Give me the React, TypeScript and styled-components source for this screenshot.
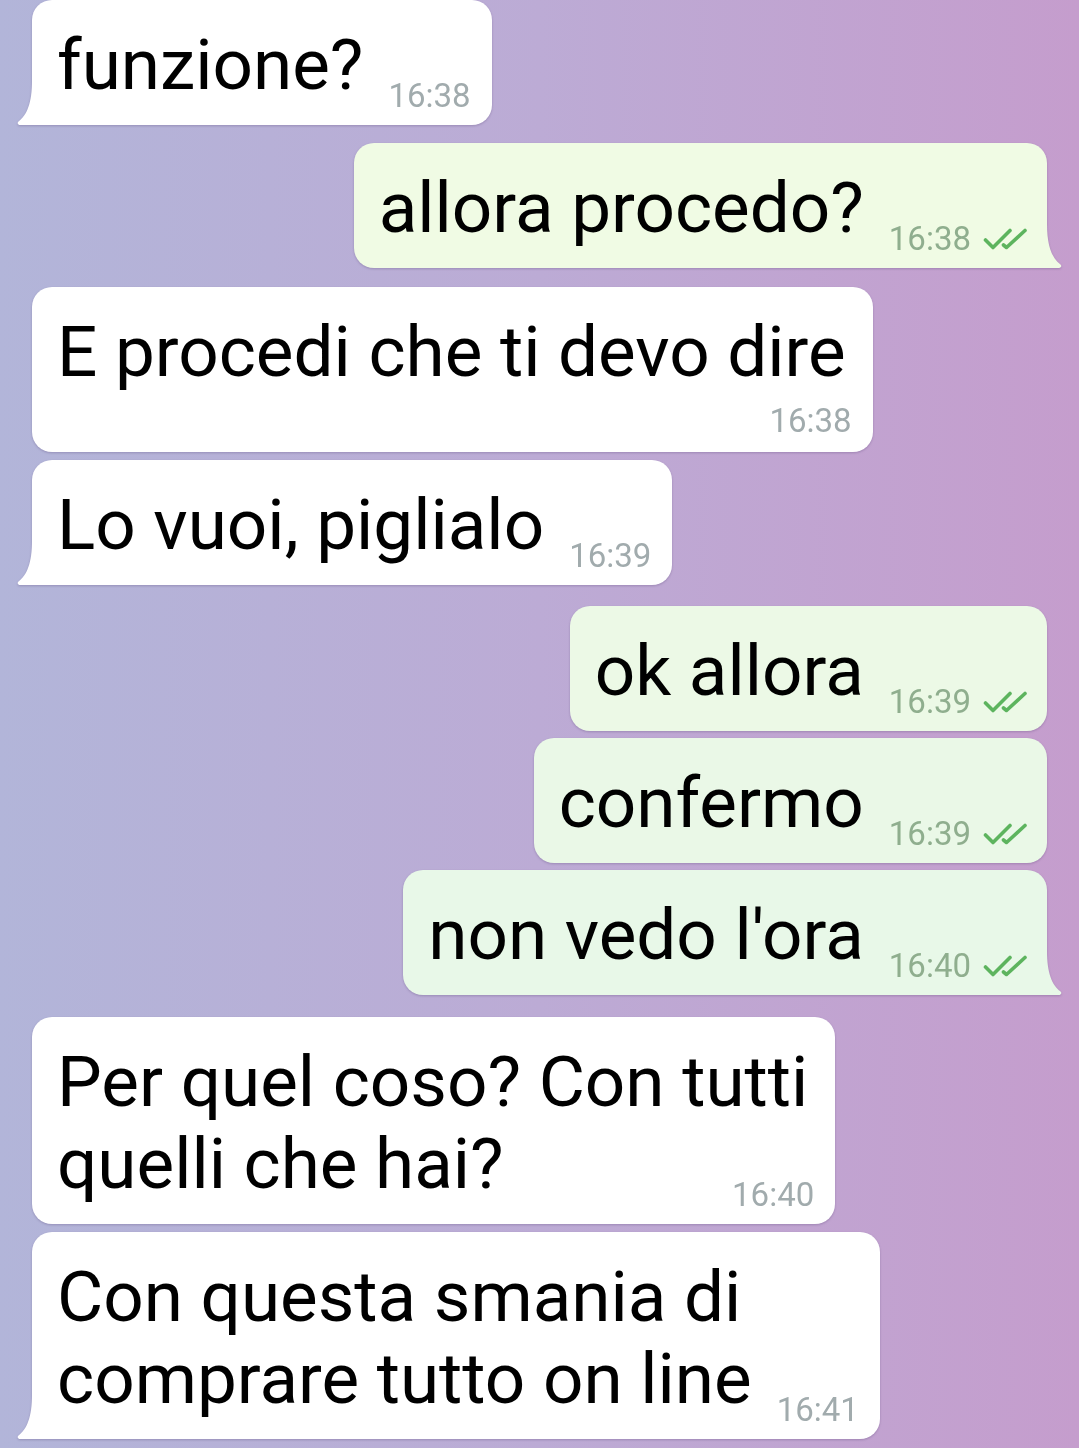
import { Fragment } from "react";
import styled, { createGlobalStyle } from "styled-components";

type Message = {
    out: boolean;
    lines: string[];
    time: string;
    gap: number;
    tail?: boolean;
    stacked?: boolean;
    bg?: string;
};

const messages: Message[] = [
    { out: false, lines: ["funzione?"], time: "16:38", gap: 0, tail: true },
    { out: true, lines: ["allora procedo?"], time: "16:38", gap: 18, tail: true, bg: "#f0fbe4" },
    { out: false, lines: ["E procedi che ti devo dire"], time: "16:38", gap: 19, stacked: true },
    { out: false, lines: ["Lo vuoi, piglialo"], time: "16:39", gap: 8, tail: true },
    { out: true, lines: ["ok allora"], time: "16:39", gap: 21, bg: "#ecf9e6" },
    { out: true, lines: ["confermo"], time: "16:39", gap: 7, bg: "#eaf8e7" },
    { out: true, lines: ["non vedo l'ora"], time: "16:40", gap: 7, tail: true, bg: "#e8f8e8" },
    { out: false, lines: ["Per quel coso? Con tutti", "quelli che hai?"], time: "16:40", gap: 22 },
    { out: false, lines: ["Con questa smania di", "comprare tutto on line"], time: "16:41", gap: 8, tail: true },
];

const GlobalStyle = createGlobalStyle`
    html, body {
        margin: 0;
        padding: 0;
    }
    body {
        width: 1079px;
        height: 1448px;
        overflow: hidden;
        background: linear-gradient(90deg, #b2b5d9 0%, #bcabd5 50%, #c59dcd 100%);
        font-family: Roboto, "Noto Sans", sans-serif;
    }
`;

const Chat = styled.div`
    display: flex;
    flex-direction: column;
    padding: 0 32px;
`;

const Row = styled.div<{ $out: boolean; $gap: number }>`
    display: flex;
    justify-content: ${({ $out }) => ($out ? "flex-end" : "flex-start")};
    margin-top: ${({ $gap }) => $gap}px;
`;

const Bubble = styled.div<{ $out: boolean; $tail: boolean; $bg: string; $stacked: boolean }>`
    position: relative;
    display: flow-root;
    padding: 24px 27px ${({ $stacked }) => ($stacked ? "15px" : "13px")} 25px;
    background: ${({ $bg }) => $bg};
    border-radius: 20px;
    ${({ $tail, $out }) =>
        $tail ? ($out ? "border-bottom-right-radius: 0;" : "border-bottom-left-radius: 0;") : ""}
    filter: drop-shadow(0 1px 1px rgba(70, 50, 100, 0.28));
    color: #000;
    font-size: 71px;
    line-height: 82px;
    white-space: nowrap;
`;

const Tail = styled.svg<{ $out: boolean }>`
    position: absolute;
    bottom: 0;
    ${({ $out }) => ($out ? "right: -16px; transform: scaleX(-1);" : "left: -16px;")}
    width: 20px;
    height: 44px;
    display: block;
`;

const Meta = styled.span<{ $out: boolean; $stacked: boolean }>`
    display: flex;
    align-items: center;
    justify-content: flex-end;
    gap: 12px;
    height: 32px;
    font-size: 33px;
    line-height: 32px;
    color: ${({ $out }) => ($out ? "#8fae8e" : "#a1abad")};
    ${({ $stacked, $out }) =>
        $stacked
            ? "margin: 12px -6px 0 0;"
            : `float: right; margin: 56px ${$out ? "-9px" : "-6px"} 0 25px;`}
`;

const Checks = () => (
    <svg width="46" height="24" viewBox="0 0 46 24" fill="none">
        <g stroke="#5db45e" strokeWidth="3.6" strokeLinecap="round" strokeLinejoin="round">
            <path d="M2.5 13 L10 20.5 L27 3.5" />
            <path d="M20.5 18 L23.5 20.5 L42 3.5" />
        </g>
    </svg>
);

const App = () => (
    <>
        <GlobalStyle />
        <Chat>
            {messages.map((m, i) => {
                const bg = m.out ? m.bg ?? "#effbe4" : "#ffffff";
                return (
                    <Row key={i} $out={m.out} $gap={m.gap}>
                        <Bubble $out={m.out} $tail={!!m.tail} $bg={bg} $stacked={!!m.stacked}>
                            {m.lines.map((line, j) => (
                                <Fragment key={j}>
                                    {j > 0 && <br />}
                                    {line}
                                </Fragment>
                            ))}
                            <Meta $out={m.out} $stacked={!!m.stacked}>
                                {m.time}
                                {m.out && <Checks />}
                            </Meta>
                            {m.tail && (
                                <Tail $out={m.out} viewBox="0 0 20 44">
                                    <path
                                        d="M16 0 C16 22 11 34 2.5 40.5 C1 41.7 1.8 44 4 44 L20 44 L20 0 Z"
                                        fill={bg}
                                    />
                                </Tail>
                            )}
                        </Bubble>
                    </Row>
                );
            })}
        </Chat>
    </>
);

export default App;
